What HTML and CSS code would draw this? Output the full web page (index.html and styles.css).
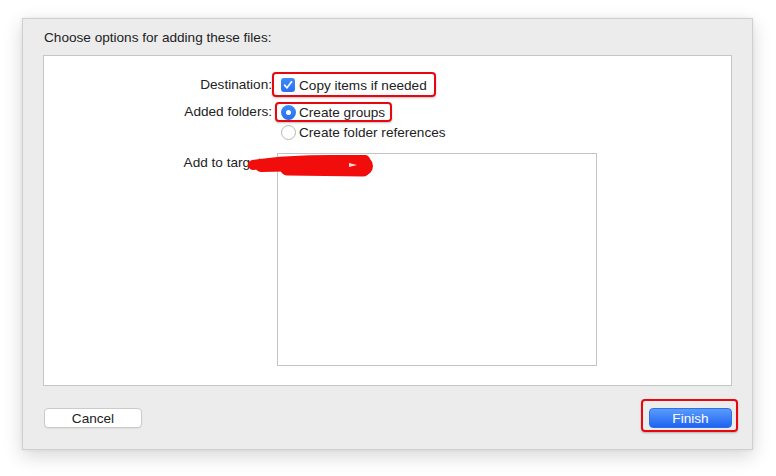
FILE: index.html
```html
<!DOCTYPE html>
<html>
<head>
<meta charset="utf-8">
<link rel="stylesheet" href="styles.css">
</head>
<body>
<div class="dialog">
  <div class="title">Choose options for adding these files:</div>
  <div class="panel">
    <div class="row r1">
      <div class="label">Destination:</div>
      <div class="ctrl">
        <span class="hl hl1"></span>
        <span class="checkbox"><svg width="14" height="14" viewBox="0 0 14 14"><path d="M3.6 7.2 L6 9.8 L10.6 3.8" fill="none" stroke="#fff" stroke-width="1.7" stroke-linecap="round" stroke-linejoin="round"/></svg></span>
        <span class="text">Copy items if needed</span>
      </div>
    </div>
    <div class="row r2">
      <div class="label">Added folders:</div>
      <div class="ctrl">
        <span class="hl hl2"></span>
        <span class="radio on"><span class="dot"></span></span>
        <span class="text">Create groups</span>
      </div>
    </div>
    <div class="row r3">
      <div class="label"></div>
      <div class="ctrl">
        <span class="radio off"></span>
        <span class="text">Create folder references</span>
      </div>
    </div>
    <div class="row r4">
      <div class="label tlabel">Add to targets:</div>
      <div class="list">
        <div class="item">
          <span class="checkbox"></span>
          <span class="text">App</span>
        </div>
      </div>
    </div>
    <svg class="scribble" width="140" height="34" viewBox="0 0 140 34">
      <path d="M6 14 C25 11 55 9 85 9 L118 9" stroke="#f20d0d" stroke-width="10" stroke-linecap="round" fill="none"/>
      <path d="M14 15 L116 13" stroke="#f20d0d" stroke-width="12" stroke-linecap="round"/>
      <path d="M40 18 L116 19" stroke="#f20d0d" stroke-width="13" stroke-linecap="round"/>
      <circle cx="116" cy="15" r="10" fill="#f20d0d"/>
      <path d="M102 12 L110 14 L102 16 Z" fill="#fff" opacity="0.85"/>
    </svg>
  </div>
  <div class="footer">
    <button class="btn cancel">Cancel</button>
    <div class="finish-wrap">
      <span class="hl hl3"></span>
      <button class="btn finish">Finish</button>
    </div>
  </div>
</div>
</body>
</html>
```

FILE: styles.css
```css
* { box-sizing: border-box; }
html, body { margin: 0; padding: 0; background: #ffffff; }
body {
  font-family: "Liberation Sans", Arial, sans-serif;
  font-size: 13.6px;
  color: #222222;
  width: 776px;
  height: 476px;
  overflow: hidden;
}
.dialog {
  width: 731px;
  height: 432px;
  margin: 18px 0 0 22px;
  background: #ececec;
  border: 1px solid #cfcfcf;
  padding: 0 20px;
  box-shadow: 0 6px 18px rgba(0,0,0,0.16), 0 0 4px rgba(0,0,0,0.06);
  display: flex;
  flex-direction: column;
}
.title {
  margin-top: 11px;
  height: 16px;
  line-height: 16px;
  padding-left: 1px;
}
.panel {
  position: relative;
  margin-top: 9px;
  height: 331px;
  background: #ffffff;
  border: 1px solid #c6c6c6;
  padding-top: 19px;
  display: flex;
  flex-direction: column;
}
.row {
  display: flex;
  align-items: center;
  height: 20px;
}
.r2 { margin-top: 7px; }
.r4 { margin-top: 11px; height: auto; align-items: flex-start; }
.label {
  width: 228px;
  text-align: right;
  margin-right: 5px;
  line-height: 20px;
}
.tlabel { line-height: 20px; }
.ctrl {
  position: relative;
  display: flex;
  align-items: center;
  height: 20px;
  padding-left: 4px;
}
.text { line-height: 20px; padding-top: 1px; }
.checkbox {
  width: 14px;
  height: 14px;
  border-radius: 3px;
  background: linear-gradient(#3d8bf8, #2a6ff0);
  margin-right: 4px;
  display: inline-flex;
}
.radio {
  width: 15px;
  height: 15px;
  border-radius: 50%;
  margin-right: 3px;
  display: inline-flex;
  align-items: center;
  justify-content: center;
}
.radio.on { background: linear-gradient(#3d8bf8, #2a6ff0); }
.radio.on .dot { width: 5px; height: 5px; border-radius: 50%; background: #fff; }
.radio.off { background: #fff; border: 1px solid #b8b8b8; }
.hl {
  position: absolute;
  border: 2px solid #e8060f;
  border-radius: 4px;
  box-shadow: 0 1px 2px rgba(0,0,0,0.25);
  pointer-events: none;
}
.hl1 { left: -5px; top: -3px; width: 164px; height: 25px; }
.hl2 { left: -2px; top: 0px; width: 117px; height: 20px; }
.list {
  width: 320px;
  height: 213px;
  border: 1px solid #c4c4c4;
  background: #fff;
}
.item {
  display: flex;
  align-items: center;
  height: 20px;
  margin-top: 1px;
  padding-left: 3px;
}
.scribble {
  position: absolute;
  left: 203px;
  top: 95px;
}
.footer {
  margin-top: 22px;
  display: flex;
  justify-content: space-between;
  padding-left: 1px;
}
.btn {
  font-family: "Liberation Sans", Arial, sans-serif;
  font-size: 13.6px;
  height: 20px;
  border-radius: 4px;
  padding: 1px 0 0 0;
  line-height: 18px;
}
.cancel {
  width: 98px;
  background: #ffffff;
  border: 1px solid #cbcbcb;
  color: #222;
  box-shadow: 0 1px 1px rgba(0,0,0,0.05);
}
.finish-wrap { position: relative; display: flex; }
.finish {
  width: 83px;
  background: linear-gradient(#5a9cfb, #1f63f2);
  border: 1px solid #2d6fe8;
  color: #ffffff;
}
.hl3 { left: -8px; top: -9px; width: 97px; height: 33px; }
```
